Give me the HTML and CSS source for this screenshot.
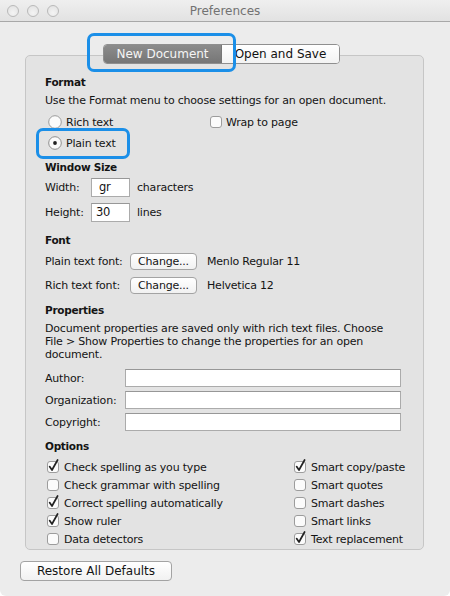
FILE: index.html
```html
<!DOCTYPE html>
<html>
<head>
<meta charset="utf-8">
<title>Preferences</title>
<link rel="stylesheet" href="styles.css">
</head>
<body>
<div class="window">
  <div class="titlebar">
    <div class="lights"><span class="light"></span><span class="light"></span><span class="light"></span></div>
    <div class="title">Preferences</div>
  </div>
  <div class="content">
    <div class="tabs">
      <div class="tab tab-sel">New Document</div>
      <div class="tab tab-open">Open and Save</div>
    </div>
    <div class="panel">
      <div class="heading h-format">Format</div>
      <div class="text t-format">Use the Format menu to choose settings for an open document.</div>
      <div class="radio-row r1">
        <div class="ctl radio-rich">
          <svg class="radio" width="14" height="14" viewBox="0 0 14 14"><circle cx="7" cy="7" r="6.3" fill="#fbfbfb" stroke="#9c9c9c" stroke-width="1"/></svg>
          <span>Rich text</span>
        </div>
        <div class="ctl">
          <svg class="cb" width="12" height="12" viewBox="0 0 12 12"><rect x="0.5" y="0.5" width="11" height="11" rx="2.5" fill="#fbfbfb" stroke="#9c9c9c"/></svg>
          <span>Wrap to page</span>
        </div>
      </div>
      <div class="radio-row r2">
        <div class="ctl">
          <svg class="radio" width="14" height="14" viewBox="0 0 14 14"><circle cx="7" cy="7" r="6.3" fill="#fbfbfb" stroke="#8e8e8e" stroke-width="1"/><circle cx="7" cy="7" r="1.9" fill="#222"/></svg>
          <span>Plain text</span>
        </div>
      </div>
      <div class="heading h-window">Window Size</div>
      <div class="size-row s1"><span class="size-label">Width:</span><span class="field field-small field-gr">gr</span><span class="unit">characters</span></div>
      <div class="size-row s2"><span class="size-label">Height:</span><span class="field field-small">30</span><span class="unit">lines</span></div>
      <div class="heading h-font">Font</div>
      <div class="font-row f1"><span class="font-label">Plain text font:</span><span class="btn">Change...</span><span class="font-name">Menlo Regular 11</span></div>
      <div class="font-row f2"><span class="font-label">Rich text font:</span><span class="btn">Change...</span><span class="font-name">Helvetica 12</span></div>
      <div class="heading h-props">Properties</div>
      <div class="text t-props">Document properties are saved only with rich text files. Choose<br>File &gt; Show Properties to change the properties for an open<br>document.</div>
      <div class="prop-row p1"><span class="prop-label">Author:</span><span class="field field-wide"></span></div>
      <div class="prop-row p2"><span class="prop-label">Organization:</span><span class="field field-wide"></span></div>
      <div class="prop-row p3"><span class="prop-label">Copyright:</span><span class="field field-wide"></span></div>
      <div class="heading h-options">Options</div>
      <div class="options">
        <div class="ctl"><svg class="cb" width="12" height="12" viewBox="0 0 12 12"><rect x="0.5" y="0.5" width="11" height="11" rx="2.5" fill="#fbfbfb" stroke="#9c9c9c"/><path d="M2.6 5.6 L5 9 L10.6 -1" fill="none" stroke="#222" stroke-width="1.7" stroke-linecap="round" stroke-linejoin="round"/></svg><span>Check spelling as you type</span></div>
        <div class="ctl"><svg class="cb" width="12" height="12" viewBox="0 0 12 12"><rect x="0.5" y="0.5" width="11" height="11" rx="2.5" fill="#fbfbfb" stroke="#9c9c9c"/><path d="M2.6 5.6 L5 9 L10.6 -1" fill="none" stroke="#222" stroke-width="1.7" stroke-linecap="round" stroke-linejoin="round"/></svg><span>Smart copy/paste</span></div>
        <div class="ctl"><svg class="cb" width="12" height="12" viewBox="0 0 12 12"><rect x="0.5" y="0.5" width="11" height="11" rx="2.5" fill="#fbfbfb" stroke="#9c9c9c"/></svg><span>Check grammar with spelling</span></div>
        <div class="ctl"><svg class="cb" width="12" height="12" viewBox="0 0 12 12"><rect x="0.5" y="0.5" width="11" height="11" rx="2.5" fill="#fbfbfb" stroke="#9c9c9c"/></svg><span>Smart quotes</span></div>
        <div class="ctl"><svg class="cb" width="12" height="12" viewBox="0 0 12 12"><rect x="0.5" y="0.5" width="11" height="11" rx="2.5" fill="#fbfbfb" stroke="#9c9c9c"/><path d="M2.6 5.6 L5 9 L10.6 -1" fill="none" stroke="#222" stroke-width="1.7" stroke-linecap="round" stroke-linejoin="round"/></svg><span>Correct spelling automatically</span></div>
        <div class="ctl"><svg class="cb" width="12" height="12" viewBox="0 0 12 12"><rect x="0.5" y="0.5" width="11" height="11" rx="2.5" fill="#fbfbfb" stroke="#9c9c9c"/></svg><span>Smart dashes</span></div>
        <div class="ctl"><svg class="cb" width="12" height="12" viewBox="0 0 12 12"><rect x="0.5" y="0.5" width="11" height="11" rx="2.5" fill="#fbfbfb" stroke="#9c9c9c"/><path d="M2.6 5.6 L5 9 L10.6 -1" fill="none" stroke="#222" stroke-width="1.7" stroke-linecap="round" stroke-linejoin="round"/></svg><span>Show ruler</span></div>
        <div class="ctl"><svg class="cb" width="12" height="12" viewBox="0 0 12 12"><rect x="0.5" y="0.5" width="11" height="11" rx="2.5" fill="#fbfbfb" stroke="#9c9c9c"/></svg><span>Smart links</span></div>
        <div class="ctl"><svg class="cb" width="12" height="12" viewBox="0 0 12 12"><rect x="0.5" y="0.5" width="11" height="11" rx="2.5" fill="#fbfbfb" stroke="#9c9c9c"/></svg><span>Data detectors</span></div>
        <div class="ctl"><svg class="cb" width="12" height="12" viewBox="0 0 12 12"><rect x="0.5" y="0.5" width="11" height="11" rx="2.5" fill="#fbfbfb" stroke="#9c9c9c"/><path d="M2.6 5.6 L5 9 L10.6 -1" fill="none" stroke="#222" stroke-width="1.7" stroke-linecap="round" stroke-linejoin="round"/></svg><span>Text replacement</span></div>
      </div>
    </div>
    <div class="restore">Restore All Defaults</div>
  </div>
  <div class="hl hl-tab"></div>
  <div class="hl hl-plain"></div>
</div>
</body>
</html>
```
FILE: styles.css
```css
* { box-sizing: border-box; }
html, body { margin: 0; padding: 0; background: #ffffff; }
body {
  font-family: "DejaVu Sans", "Liberation Sans", sans-serif;
  font-size: 11px;
  letter-spacing: -0.2px;
  color: #141414;
}
.window {
  position: relative;
  width: 450px;
  height: 596px;
  background: #ececec;
  border-radius: 0 0 6px 6px;
  overflow: hidden;
}
.titlebar {
  height: 22px;
  display: flex;
  align-items: center;
  background: linear-gradient(#efefef, #e2e2e2);
  border-bottom: 1px solid #a8a8a8;
}
.lights {
  display: flex;
  gap: 8px;
  padding-left: 7px;
  width: 80px;
}
.light {
  width: 12px;
  height: 12px;
  border-radius: 50%;
  border: 1px solid #b9b9b9;
  background: radial-gradient(circle at 50% 70%, #f4f4f4, #e0e0e0);
}
.title {
  flex: 1;
  text-align: center;
  margin-right: 80px;
  font-size: 12px;
  letter-spacing: 0;
  color: #727272;
  line-height: 22px;
}
.content {
  padding: 22px 0 0 25px;
  display: flex;
  flex-direction: column;
  align-items: flex-start;
}
.tabs {
  position: relative;
  z-index: 1;
  display: flex;
  margin-left: 78px;
  height: 20px;
  border: 1px solid #8f8f8f;
  border-radius: 4px;
  overflow: hidden;
  background: #ffffff;
}
.tab {
  font-size: 12px;
  letter-spacing: 0;
  line-height: 18px;
  text-align: center;
  color: #111;
  background: linear-gradient(#ffffff, #f3f3f3);
}
.tab-sel {
  width: 118px;
  color: #f5f5f5;
  background: linear-gradient(#8c8c8c, #767676);
  border-right: 1px solid #777;
}
.tab-open { width: 117px; }
.panel {
  margin-top: -9px;
  width: 399px;
  background: #e3e3e3;
  border: 1px solid #c6c6c6;
  border-radius: 5px;
  padding: 19px 0 1px 19px;
  display: flex;
  flex-direction: column;
  align-items: flex-start;
}
.heading {
  font-weight: bold;
  font-size: 10.5px;
  letter-spacing: -0.3px;
  height: 14px;
  line-height: 14px;
}
.text { line-height: 14px; }
.t-format { margin-top: 5px; height: 14px; white-space: nowrap; }
.radio-row { display: flex; align-items: center; height: 16px; padding-left: 3px; }
.r1 { margin-top: 6px; }
.r2 { margin-top: 5px; }
.ctl { display: flex; align-items: center; gap: 5px; white-space: nowrap; }
.radio-row .ctl { gap: 4px; }
.radio-rich { width: 162px; }
.radio, .cb { display: block; flex: none; overflow: visible; }
.h-window { margin-top: 9px; }
.size-row { display: flex; align-items: center; height: 19px; }
.s1 { margin-top: 4px; }
.s2 { margin-top: 6px; }
.size-label { width: 46px; }
.field {
  display: block;
  background: #ffffff;
  border: 1px solid #ababab;
  border-top-color: #979797;
}
.field-small {
  width: 39px;
  height: 19px;
  line-height: 17px;
  padding-left: 4px;
  font-size: 11.5px;
}
.field-gr { padding-left: 7px; }
.unit { margin-left: 7px; }
.h-font { margin-top: 11px; }
.font-row { display: flex; align-items: center; height: 17px; }
.f1 { margin-top: 6px; }
.f2 { margin-top: 7px; }
.font-label { width: 85px; }
.btn {
  width: 67px;
  height: 17px;
  line-height: 15px;
  text-align: center;
  border: 1px solid #a3a3a3;
  border-radius: 4px;
  background: linear-gradient(#ffffff, #f1f1f1);
}
.font-name { margin-left: 10px; }
.h-props { margin-top: 9px; }
.t-props { margin-top: 5px; line-height: 13px; white-space: nowrap; }
.prop-row { display: flex; align-items: center; height: 18px; }
.p1 { margin-top: 8px; }
.p2, .p3 { margin-top: 4px; }
.prop-label { width: 80px; }
.field-wide { width: 276px; height: 18px; }
.h-options { margin-top: 8px; }
.options {
  margin-top: 5px;
  margin-left: 2px;
  display: grid;
  grid-template-columns: 247px auto;
  grid-auto-rows: 18px;
  align-items: center;
}
.restore {
  margin-top: 11px;
  margin-left: -5px;
  width: 152px;
  height: 20px;
  line-height: 18px;
  text-align: center;
  font-size: 12px;
  letter-spacing: 0;
  border: 1px solid #a3a3a3;
  border-radius: 4px;
  background: linear-gradient(#ffffff, #f1f1f1);
}
.hl {
  position: absolute;
  border: 3px solid #1b8fe8;
  border-radius: 7px;
  z-index: 5;
}
.hl-tab { left: 87px; top: 33px; width: 149px; height: 39px; }
.hl-plain { left: 36px; top: 128px; width: 94px; height: 31px; }
```
